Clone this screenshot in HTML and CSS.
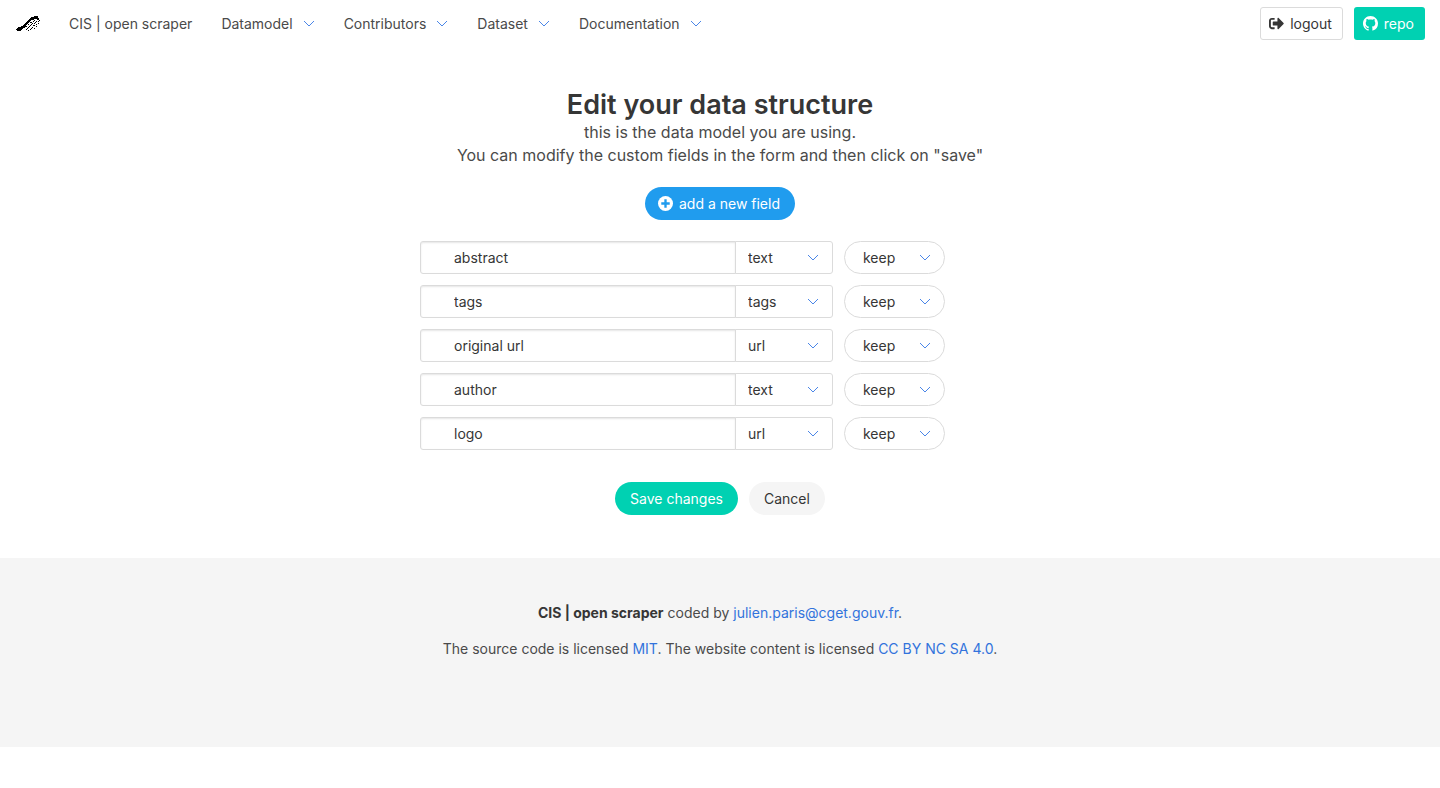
FILE: index.html
```html
<!DOCTYPE html>
<html lang="en">
<head>
<meta charset="utf-8">
<meta name="viewport" content="width=device-width, initial-scale=1">
<title>CIS | open scraper</title>
<link rel="stylesheet" href="styles.css">
</head>
<body>
<svg class="defs" aria-hidden="true">
  <symbol id="chevron" viewBox="0 0 12 7"><path d="M1 1l5 5 5-5" fill="none" stroke="#4a86e8" stroke-width="1"/></symbol>
</svg>
<header class="navbar">
  <a class="brand" href="#" aria-label="Home">
    <svg class="brand-logo" viewBox="0 0 24 16" aria-hidden="true" shape-rendering="crispEdges">
      <path d="M0 13l2-2 5-1 2-3 3-3 4-3 4-1h2l1 3h-3l-4 1-4 3-2 3-2 2-2 1-2 2H1z" fill="#000"/>
      <path d="M14 6.500h2M18 4.500h1M21 3.500h2M12 8.500h1M16 7.500h1M19 6.500h1M22 5.500h1M10 10.500h1M14 9.500h1M17 9.500h2M20 8.500h1M23 4.500h1M12 11.500h1M16 11.500h1M20 10.500h1M10 13.500h1M14 13.500h1M18 12.500h1M22 7.500h1M12 14.500h1M17 5.500h1M20 5.500h1M18 7.500h1M15 8.500h1M13 10.500h1M11 12.500h1M15 12.500h1" stroke="#000"/>
    </svg>
  </a>
  <nav class="menu" aria-label="Main">
    <a class="menu-item" href="#">CIS | open scraper</a>
    <a class="menu-item" href="#">Datamodel<svg class="chevron"><use href="#chevron"/></svg></a>
    <a class="menu-item" href="#">Contributors<svg class="chevron"><use href="#chevron"/></svg></a>
    <a class="menu-item" href="#">Dataset<svg class="chevron"><use href="#chevron"/></svg></a>
    <a class="menu-item" href="#">Documentation<svg class="chevron"><use href="#chevron"/></svg></a>
  </nav>
  <div class="actions">
    <a class="button button-outline" href="#">
      <svg class="icon" viewBox="0 0 512 512" aria-hidden="true"><path fill="currentColor" d="M497 273L329 441c-15 15-41 4.500-41-17v-96H152c-13.300 0-24-10.700-24-24v-96c0-13.300 10.700-24 24-24h136V88c0-21.400 25.900-32 41-17l168 168c9.300 9.400 9.300 24.600 0 34zM192 436v-40c0-6.600-5.400-12-12-12H96c-17.700 0-32-14.300-32-32V160c0-17.700 14.300-32 32-32h84c6.600 0 12-5.400 12-12V76c0-6.600-5.400-12-12-12H96c-53 0-96 43-96 96v192c0 53 43 96 96 96h84c6.600 0 12-5.400 12-12z"/></svg>
      logout
    </a>
    <a class="button button-primary" href="#">
      <svg class="icon" viewBox="0 0 16 16" aria-hidden="true"><path fill="currentColor" d="M8 0C3.580 0 0 3.580 0 8c0 3.540 2.290 6.530 5.470 7.590.4.070.55-.17.55-.38 0-.19-.01-.82-.01-1.490-2.010.37-2.530-.49-2.690-.94-.09-.23-.48-.94-.82-1.130-.28-.15-.68-.52-.01-.53.63-.01 1.080.58 1.230.82.72 1.210 1.870.87 2.330.66.07-.52.28-.87.51-1.070-1.780-.2-3.640-.89-3.640-3.950 0-.87.31-1.590.82-2.150-.08-.2-.36-1.020.08-2.120 0 0 .67-.21 2.200.82.64-.18 1.320-.27 2-.27s1.360.09 2 .27c1.530-1.040 2.200-.82 2.200-.82.44 1.100.16 1.920.08 2.120.51.56.82 1.270.82 2.150 0 3.070-1.870 3.750-3.650 3.950.29.25.54.73.54 1.480 0 1.070-.01 1.930-.01 2.200 0 .21.15.46.55.38A8.010 8.010 0 0 0 16 8c0-4.420-3.580-8-8-8z"/></svg>
      repo
    </a>
  </div>
</header>

<main class="content">
  <h1 class="title">Edit your data structure</h1>
  <p class="subtitle">this is the data model you are using.<br>You can modify the custom fields in the form and then click on "save"</p>
  <button class="button button-info pill" type="button">
    <svg class="icon" viewBox="0 0 16 16" aria-hidden="true"><circle cx="8" cy="8" r="8" fill="#fff"/><path d="M8 3.500v9M3.500 8h9" stroke="#209cee" stroke-width="2.500"/></svg>
    add a new field
  </button>
  <form class="form">
    <div class="fields">
      <div class="field-row">
        <div class="group"><input class="input" type="text" value="abstract" aria-label="Field 1 name"><div class="select"><select aria-label="Field 1 type"><option>text</option><option>tags</option><option>url</option></select><svg class="chevron"><use href="#chevron"/></svg></div></div>
        <div class="select select-round"><select aria-label="Field 1 action"><option>keep</option><option>delete</option></select><svg class="chevron"><use href="#chevron"/></svg></div>
      </div>
      <div class="field-row">
        <div class="group"><input class="input" type="text" value="tags" aria-label="Field 2 name"><div class="select"><select aria-label="Field 2 type"><option>tags</option><option>text</option><option>url</option></select><svg class="chevron"><use href="#chevron"/></svg></div></div>
        <div class="select select-round"><select aria-label="Field 2 action"><option>keep</option><option>delete</option></select><svg class="chevron"><use href="#chevron"/></svg></div>
      </div>
      <div class="field-row">
        <div class="group"><input class="input" type="text" value="original url" aria-label="Field 3 name"><div class="select"><select aria-label="Field 3 type"><option>url</option><option>text</option><option>tags</option></select><svg class="chevron"><use href="#chevron"/></svg></div></div>
        <div class="select select-round"><select aria-label="Field 3 action"><option>keep</option><option>delete</option></select><svg class="chevron"><use href="#chevron"/></svg></div>
      </div>
      <div class="field-row">
        <div class="group"><input class="input" type="text" value="author" aria-label="Field 4 name"><div class="select"><select aria-label="Field 4 type"><option>text</option><option>tags</option><option>url</option></select><svg class="chevron"><use href="#chevron"/></svg></div></div>
        <div class="select select-round"><select aria-label="Field 4 action"><option>keep</option><option>delete</option></select><svg class="chevron"><use href="#chevron"/></svg></div>
      </div>
      <div class="field-row">
        <div class="group"><input class="input" type="text" value="logo" aria-label="Field 5 name"><div class="select"><select aria-label="Field 5 type"><option>url</option><option>text</option><option>tags</option></select><svg class="chevron"><use href="#chevron"/></svg></div></div>
        <div class="select select-round"><select aria-label="Field 5 action"><option>keep</option><option>delete</option></select><svg class="chevron"><use href="#chevron"/></svg></div>
      </div>
    </div>
    <div class="form-actions">
      <button class="button button-primary pill wide" type="submit">Save changes</button>
      <button class="button button-light pill wide" type="button">Cancel</button>
    </div>
  </form>
</main>

<footer class="footer">
  <p><strong>CIS | open scraper</strong> coded by <a href="mailto:julien.paris@cget.gouv.fr">julien.paris@cget.gouv.fr</a>.</p>
  <p>The source code is licensed <a href="#">MIT</a>. The website content is licensed <a href="#">CC BY NC SA 4.0</a>.</p>
</footer>
</body>
</html>
```
FILE: styles.css
```css
*, *::before, *::after { box-sizing: border-box; }
body {
  margin: 0;
  background: #fff;
  color: #4a4a4a;
  font: 14px/22px Inter, "Liberation Sans", sans-serif;
}
a { color: #3273dc; text-decoration: none; }
p, h1 { margin: 0; }
button, input, select { font: inherit; margin: 0; }
.defs { display: none; }
.chevron { width: 12px; height: 7px; flex: none; }

.navbar { display: flex; align-items: center; min-height: 47px; padding: 0 15px 0 16px; }
.brand { display: flex; margin-right: 29px; }
.brand-logo { width: 24px; height: 16px; }
.menu { display: flex; gap: 29px; }
.menu-item { display: flex; align-items: center; gap: 10px; color: #4a4a4a; }
.actions { display: flex; gap: 11px; margin-left: auto; }

.button {
  display: inline-flex;
  align-items: center;
  justify-content: center;
  gap: 6px;
  height: 33px;
  padding: 0 10px 0 8px;
  border: 1px solid transparent;
  border-radius: 3px;
  cursor: pointer;
}
.icon { width: 15px; height: 15px; flex: none; }
.button-outline { border-color: #dbdbdb; color: #363636; }
.button-primary { background: #00d1b2; color: #fff; }
.button-info { background: #209cee; color: #fff; }
.button-light { background: #f5f5f5; color: #363636; }
.pill { border-radius: 17px; padding: 0 14px 0 12px; }
.wide { padding: 0 14px; }

.content { display: flex; flex-direction: column; align-items: center; padding: 42px 24px 43px; }
.title { color: #363636; font-size: 27px; line-height: 32px; font-weight: 600; }
.subtitle { font-size: 16px; line-height: 23px; text-align: center; margin-bottom: 20px; }

.form { width: 100%; max-width: 600px; margin-top: 21px; }
.fields { display: flex; flex-direction: column; gap: 11px; }
.field-row { display: flex; gap: 11px; }
.group { display: flex; flex: 0 1 413px; min-width: 0; }
.input {
  flex: 1;
  min-width: 0;
  height: 33px;
  padding: 0 12px 0 33px;
  border: 1px solid #dbdbdb;
  border-radius: 3px 0 0 3px;
  background: #fff;
  color: #363636;
  box-shadow: inset 0 1px 2px rgba(10, 10, 10, .1);
}
.select { display: grid; flex: none; width: 98px; align-items: center; margin-left: -1px; }
.select select, .select .chevron { grid-area: 1 / 1; }
.select select {
  appearance: none;
  width: 100%;
  height: 33px;
  padding: 0 32px 0 12px;
  border: 1px solid #dbdbdb;
  border-radius: 0 3px 3px 0;
  background: #fff;
  color: #363636;
}
.select .chevron { justify-self: end; margin-right: 14px; pointer-events: none; }
.select-round { width: 101px; margin-left: 0; }
.select-round select { border-radius: 17px; padding-left: 18px; }

.form-actions { display: flex; justify-content: center; gap: 11px; margin-top: 32px; }

.footer { background: #f5f5f5; padding: 44px 22px 87px; text-align: center; }
.footer p + p { margin-top: 14px; }
.footer strong { color: #363636; font-weight: 700; }
```
